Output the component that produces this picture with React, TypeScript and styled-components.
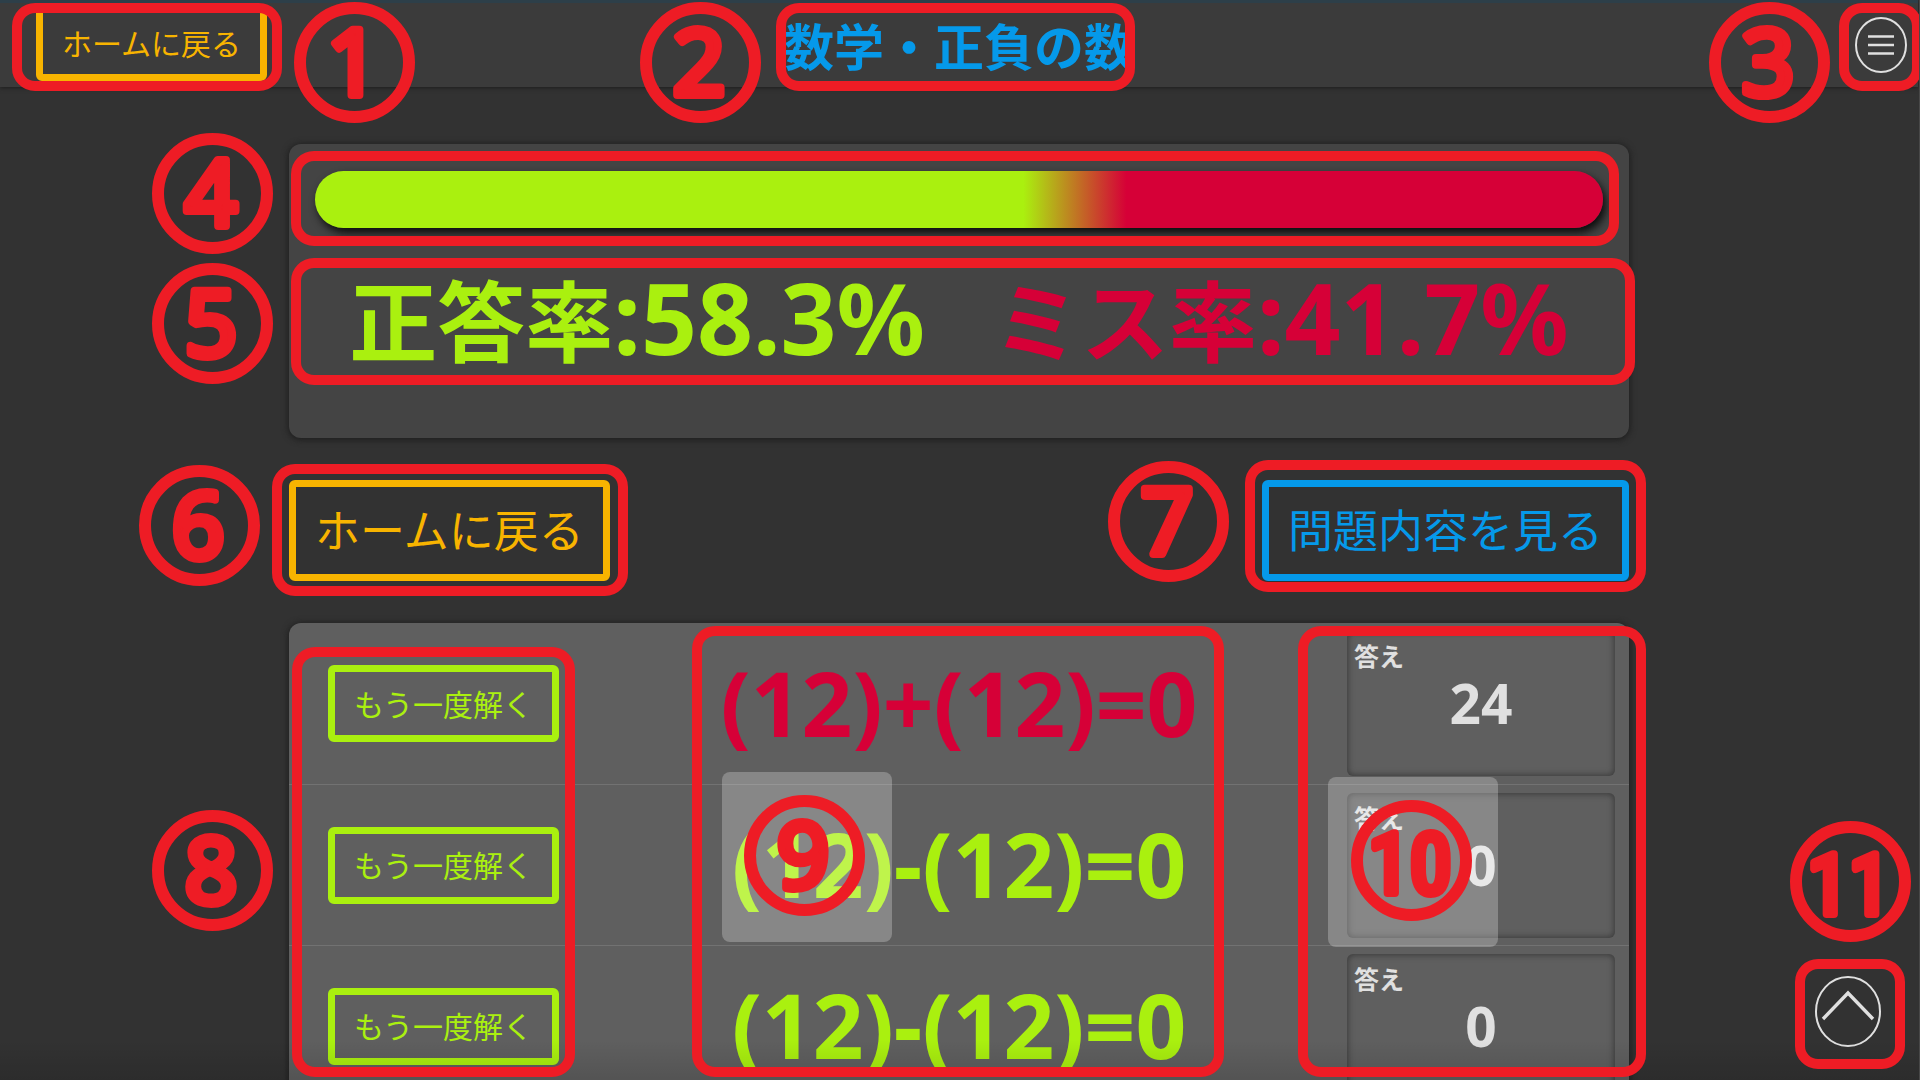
import React from "react";
import styled, { createGlobalStyle, css } from "styled-components";

const GREEN = "#aaf00f";
const CRIMSON = "#d60037";
const AMBER = "#f8b400";
const BLUE = "#0599ea";
const MARK = "#ee1c25";
const LIGHT = "#e0e0e0";

const GlobalStyle = createGlobalStyle`
  *, *::before, *::after { box-sizing: border-box; }
  body {
    margin: 0;
    background: #323232;
    color: ${LIGHT};
    font-family: "Noto Sans", "Noto Sans CJK JP", sans-serif;
  }
`;

const Page = styled.div`
  position: relative;
  height: 100vh;
  overflow: hidden;
  padding-right: 1px;
  border-right: 1px solid #484848;
`;

const Header = styled.header`
  display: grid;
  grid-template-columns: 1fr auto 1fr;
  align-items: start;
  height: 87px;
  padding: 1px 11px 0;
  border-top: 3px solid #2d3f49;
  background: #3b3b3b;
  box-shadow: 0 1px 4px #1e1e1e;
`;

const Title = styled.h1`
  margin: 0;
  color: ${BLUE};
  font: 700 50px/80px "Noto Sans CJK JP", sans-serif;
`;

const OutlineButton = styled.button<{ $tone: string; $large?: boolean }>`
  display: inline-flex;
  align-items: center;
  justify-content: center;
  border: 7px solid ${(p) => p.$tone};
  border-radius: 6px;
  background: transparent;
  color: ${(p) => p.$tone};
  font-family: "Noto Sans CJK JP", sans-serif;
  font-weight: 400;
  white-space: nowrap;
  cursor: pointer;
  ${(p) =>
    p.$large
      ? css`
          height: 101px;
          padding: 0 19px 4px;
          font-size: 45px;
        `
      : css`
          height: 77px;
          padding: 0 19px 2px;
          font-size: 30px;
        `}
`;

const HeaderStart = styled.div`
  justify-self: start;
  padding-left: 25px;
`;

const RoundButton = styled.button`
  display: block;
  padding: 0;
  border: 0;
  background: transparent;
  color: ${LIGHT};
  cursor: pointer;

  svg {
    display: block;
  }
`;

const HeaderEnd = styled.div`
  justify-self: end;
  padding-top: 13px;
`;

const Content = styled.main`
  width: 1340px;
  max-width: 90%;
  margin: 57px auto 0;
`;

const ScorePanel = styled.section`
  height: 294px;
  padding: 27px 26px;
  border-radius: 12px;
  background: #444;
  box-shadow: 0 1px 6px 1px #1e1e1e;
`;

const ScoreBar = styled.div`
  height: 57px;
  border-radius: 29px;
  background: linear-gradient(90deg, ${GREEN} 55%, ${CRIMSON} 63%);
  box-shadow: 3px 5px 8px #0c0c0c;
`;

const Rates = styled.div`
  display: flex;
  justify-content: center;
  gap: 68px;
  margin-top: 25px;
`;

const Rate = styled.p<{ $tone: string }>`
  margin: 0;
  color: ${(p) => p.$tone};
  font: 700 88px/128px "Noto Sans CJK JP", sans-serif;
  white-space: nowrap;
`;

const Figure = styled.span`
  font-family: "Noto Sans", sans-serif;
  font-size: 98px;
  line-height: 1;
`;

const Actions = styled.div`
  display: flex;
  justify-content: space-between;
  margin: 42px 0;
`;

const Results = styled.table`
  width: 100%;
  table-layout: fixed;
  border-collapse: separate;
  border-spacing: 0;
  border-radius: 12px;
  background: #5f5f5f;
  box-shadow: 0 1px 6px 1px #1e1e1e;
`;

const ResultRow = styled.tr`
  height: 161px;

  & + & > td {
    border-top: 1px solid #727272;
  }
`;

const RetryCell = styled.td`
  width: 300px;
  padding: 0 0 0 39px;
`;

const FormulaCell = styled.td<{ $tone: string }>`
  padding: 0 0 2px;
  color: ${(p) => p.$tone};
  font-size: 89px;
  font-weight: 700;
  line-height: 120px;
  text-align: center;
`;

const AnswerCell = styled.td`
  width: 300px;
  padding: 0 14px 0 18px;
`;

const AnswerBox = styled.div`
  display: grid;
  height: 145px;
  border-radius: 6px;
  box-shadow: inset 0 0 6px 1px #3a3a3a;
  font-weight: 700;
`;

const AnswerLabel = styled.span`
  grid-area: 1 / 1;
  padding: 9px 7px;
  font-size: 25px;
  line-height: 32px;
`;

const AnswerValue = styled.span`
  grid-area: 1 / 1;
  place-self: center;
  padding-bottom: 2px;
  font-size: 55px;
  line-height: 1;
`;

const ToTop = styled.div`
  position: absolute;
  right: 38px;
  bottom: 33px;
`;

const BottomShade = styled.div`
  position: absolute;
  inset: auto 0 0;
  height: 40px;
  background: linear-gradient(transparent, rgba(0, 0, 0, 0.12));
  pointer-events: none;
`;

const MarkLayer = styled.div`
  position: absolute;
  inset: 0;
  pointer-events: none;
`;

const Frame = styled.div<{ $x: number; $y: number; $w: number; $h: number }>`
  position: absolute;
  left: ${(p) => p.$x}px;
  top: ${(p) => p.$y}px;
  width: ${(p) => p.$w}px;
  height: ${(p) => p.$h}px;
  border: 10px solid ${MARK};
  border-radius: 23px;
`;

const Backing = styled.div<{ $x: number; $y: number }>`
  position: absolute;
  left: ${(p) => p.$x}px;
  top: ${(p) => p.$y}px;
  width: 170px;
  height: 170px;
  border-radius: 8px;
  background: rgba(255, 255, 255, 0.25);
`;

const Badge = styled.svg<{ $x: number; $y: number }>`
  position: absolute;
  left: ${(p) => p.$x}px;
  top: ${(p) => p.$y}px;
  width: 121px;
  height: 121px;

  circle {
    fill: none;
    stroke: ${MARK};
    stroke-width: 12px;
  }
`;

const BadgeNumber = styled.text<{ $twoDigits: boolean }>`
  fill: ${MARK};
  stroke: ${MARK};
  stroke-width: 8px;
  stroke-linejoin: round;
  font-family: ${(p) => (p.$twoDigits ? '"Roboto Condensed", Roboto' : '"Noto Sans"')}, sans-serif;
  font-size: ${(p) => (p.$twoDigits ? 84 : 92)}px;
  font-weight: 400;
  text-anchor: middle;
`;

const results = [
  { formula: "(12)+(12)=0", answer: "24", tone: CRIMSON },
  { formula: "(12)-(12)=0", answer: "0", tone: GREEN },
  { formula: "(12)-(12)=0", answer: "0", tone: GREEN },
];

const frames = [
  [12, 3, 270, 88],
  [776, 3, 359, 88],
  [1839, 3, 83, 88],
  [291, 151, 1328, 95],
  [291, 258, 1344, 127],
  [272, 464, 356, 132],
  [1245, 460, 401, 132],
  [292, 647, 283, 430],
  [692, 626, 532, 451],
  [1298, 626, 348, 451],
  [1795, 959, 110, 110],
];

const badges = [
  [294, 2],
  [640, 2],
  [1709, 2],
  [152, 133],
  [152, 263],
  [139, 465],
  [1108, 461],
  [152, 810],
  [744, 795],
  [1351, 800],
  [1790, 821],
];

export default function App() {
  return (
    <Page>
      <GlobalStyle />
      <Header>
        <HeaderStart>
          <OutlineButton $tone={AMBER}>ホームに戻る</OutlineButton>
        </HeaderStart>
        <Title>数学・正負の数</Title>
        <HeaderEnd>
          <RoundButton aria-label="メニュー">
            <svg width="52" height="56" viewBox="0 0 52 56" fill="none" stroke="currentColor">
              <ellipse cx="26" cy="28" rx="25" ry="27" strokeWidth="2" />
              <path d="M13 19.5h26M13 28h26M13 36.5h26" strokeWidth="2.6" />
            </svg>
          </RoundButton>
        </HeaderEnd>
      </Header>

      <Content>
        <ScorePanel>
          <ScoreBar />
          <Rates>
            <Rate $tone={GREEN}>
              正答率<Figure>:58.3%</Figure>
            </Rate>
            <Rate $tone={CRIMSON}>
              ミス率<Figure>:41.7%</Figure>
            </Rate>
          </Rates>
        </ScorePanel>

        <Actions>
          <OutlineButton $tone={AMBER} $large>
            ホームに戻る
          </OutlineButton>
          <OutlineButton $tone={BLUE} $large>
            問題内容を見る
          </OutlineButton>
        </Actions>

        <Results>
          <tbody>
            {results.map((r, i) => (
              <ResultRow key={i}>
                <RetryCell>
                  <OutlineButton $tone={GREEN}>もう一度解く</OutlineButton>
                </RetryCell>
                <FormulaCell $tone={r.tone}>{r.formula}</FormulaCell>
                <AnswerCell>
                  <AnswerBox>
                    <AnswerLabel>答え</AnswerLabel>
                    <AnswerValue>{r.answer}</AnswerValue>
                  </AnswerBox>
                </AnswerCell>
              </ResultRow>
            ))}
          </tbody>
        </Results>
      </Content>

      <ToTop>
        <RoundButton aria-label="ページの先頭へ">
          <svg width="66" height="71" viewBox="0 0 66 71" fill="none" stroke="currentColor">
            <ellipse cx="33" cy="35.5" rx="32" ry="34.5" strokeWidth="2" />
            <path d="M8 43 33 17l25 26" strokeWidth="3.4" />
          </svg>
        </RoundButton>
      </ToTop>
      <BottomShade />

      <MarkLayer>
        <Backing $x={722} $y={772} />
        <Backing $x={1328} $y={777} />
        {frames.map(([x, y, w, h], i) => (
          <Frame key={i} $x={x} $y={y} $w={w} $h={h} />
        ))}
        {badges.map(([x, y], i) => (
          <Badge key={i} viewBox="0 0 121 121" $x={x} $y={y}>
            <circle cx="60.5" cy="60.5" r="54.5" />
            <BadgeNumber x="59" y="93" $twoDigits={i + 1 > 9}>
              {i + 1}
            </BadgeNumber>
          </Badge>
        ))}
      </MarkLayer>
    </Page>
  );
}
